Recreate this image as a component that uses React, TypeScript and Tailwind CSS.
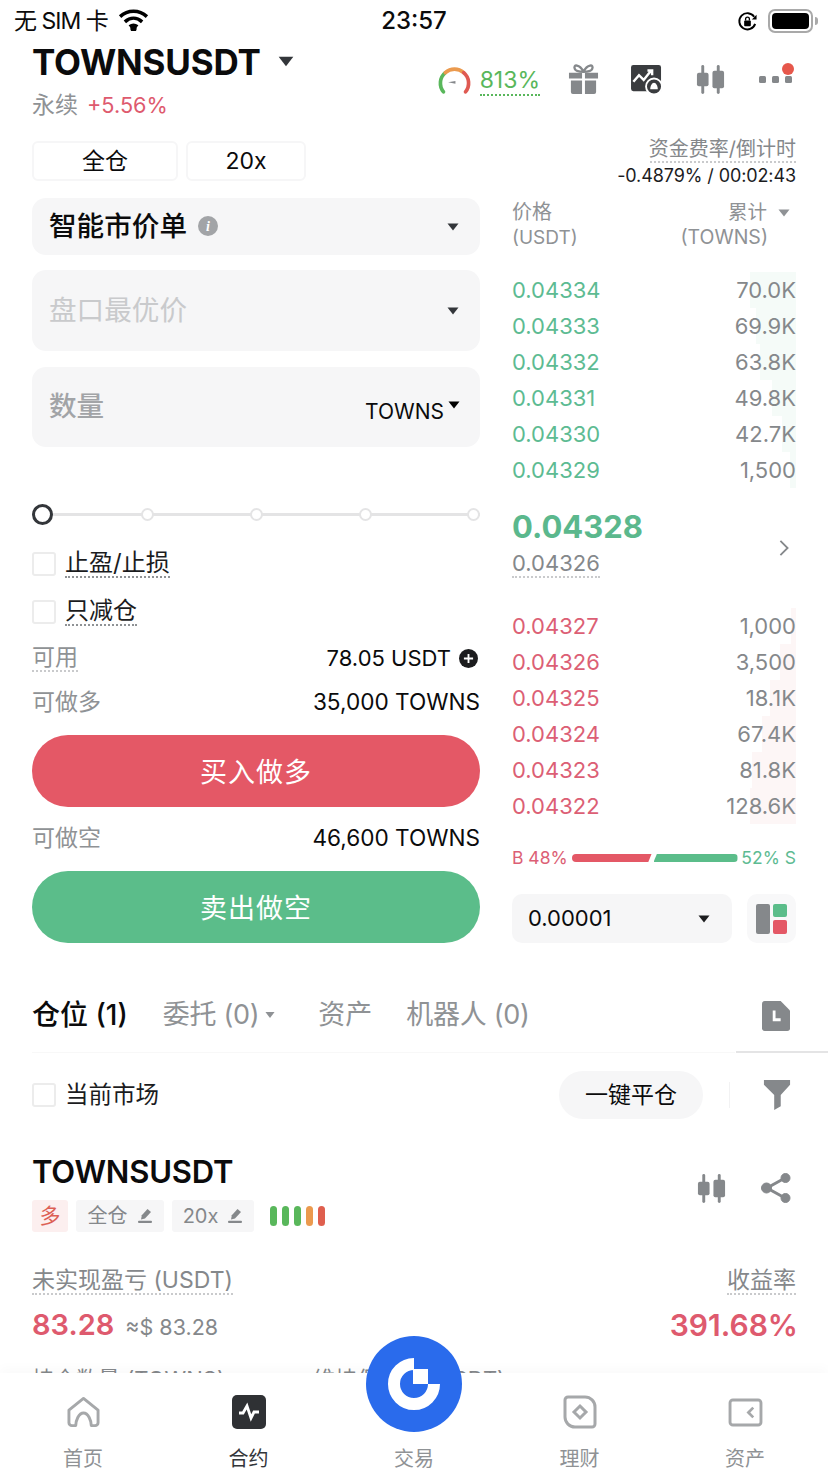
import type { ReactNode } from "react"

const asks = [
  ["0.04334", "70.0K", "w-[46px]"],
  ["0.04333", "69.9K", "w-[40px]"],
  ["0.04332", "63.8K", "w-[36px]"],
  ["0.04331", "49.8K", "w-[24px]"],
  ["0.04330", "42.7K", "w-[14px]"],
  ["0.04329", "1,500", "w-[6px]"],
]

const bids = [
  ["0.04327", "1,000", "w-[5px]"],
  ["0.04326", "3,500", "w-[16px]"],
  ["0.04325", "18.1K", "w-[26px]"],
  ["0.04324", "67.4K", "w-[34px]"],
  ["0.04323", "81.8K", "w-[44px]"],
  ["0.04322", "128.6K", "w-[46px]"],
]

function Caret({ className = "" }: { className?: string }) {
  return (
    <svg viewBox="0 0 12 8" className={className}>
      <path d="M0.5 0.5h11L6 7.5z" fill="currentColor" />
    </svg>
  )
}

function Candles({ className = "" }: { className?: string }) {
  return (
    <svg viewBox="0 0 32 32" className={className} fill="#85888b">
      <rect x="6.5" y="1" width="3" height="30" rx="1.5" />
      <rect x="2" y="9" width="12" height="14" rx="2" />
      <rect x="22.500" y="1" width="3" height="30" rx="1.5" />
      <rect x="18" y="7" width="12" height="18" rx="2" />
    </svg>
  )
}

function Pen() {
  return (
    <svg viewBox="0 0 16 16" className="w-[16px] h-[16px]" fill="#85888b">
      <path d="M10.500 1l3.500 3-6 6.500-4 1 .8-4.200z" />
      <rect x="1" y="12.800" width="14" height="2.200" rx="1" />
    </svg>
  )
}

function Checkbox() {
  return <span className="w-[24px] h-[24px] rounded-[3px] border-2 border-[#ececec] bg-white shrink-0" />
}

function Dotted({ children, className = "" }: { children: ReactNode; className?: string }) {
  return <span className={`border-b-2 border-dotted leading-[26px] ${className}`}>{children}</span>
}

function NavItem({ label, icon, active }: { label: string; icon: ReactNode; active?: boolean }) {
  return (
    <div className="w-[96px] flex flex-col items-center">
      <div className="h-[36px] flex items-center justify-center">{icon}</div>
      <span className={`mt-[17px] text-[20px] leading-[24px] ${active ? "text-[#33363a]" : "text-[#8f9295]"}`}>{label}</span>
    </div>
  )
}

export default function App() {
  return (
    <div className="relative w-[828px] h-[1472px] overflow-hidden bg-white font-['Inter','Noto_Sans_CJK_SC',sans-serif] text-[#0b0b0c]">
      {/* Status bar */}
      <div className="h-[42px] flex items-center justify-between pl-[14px] pr-[10px]">
        <div className="w-[260px] flex items-center gap-[10px] text-[23px] tracking-[-1px]">
          <span>无 SIM 卡</span>
          <svg viewBox="0 0 32 24" className="w-[31px] h-[23px] -mt-[3px]" fill="none" stroke="#000" strokeWidth="3.6">
            <path d="M2 9c8-7.500 20-7.500 28 0" />
            <path d="M7 14.500c5.500-5 12.500-5 18 0" />
            <path d="M12 19.500c2.500-2 5.500-2 8 0" />
            <circle cx="16" cy="21.500" r="1.500" fill="#000" />
          </svg>
        </div>
        <span className="text-[24px] font-medium">23:57</span>
        <div className="w-[264px] flex items-center justify-end gap-[10px]">
          <svg viewBox="0 0 22 22" className="w-[21px] h-[21px]" fill="none" stroke="#000" strokeWidth="2">
            <path d="M19 13.500A8.500 8.500 0 1 1 18 6" />
            <path d="M20.500 4v5h-5z" fill="#000" stroke="none" />
            <rect x="7.500" y="10" width="7" height="6" rx="1" fill="#000" stroke="none" />
            <path d="M9 10V8.500a2 2 0 0 1 4 0V10" strokeWidth="1.400" />
          </svg>
          <div className="flex items-center gap-[2px]">
            <div className="w-[45px] h-[24px] rounded-[7px] border-2 border-[#a9a9a9] p-[2px]">
              <div className="w-full h-full rounded-[4px] bg-black" />
            </div>
            <div className="w-[3px] h-[8px] rounded-r-full bg-[#a9a9a9]" />
          </div>
        </div>
      </div>

      {/* Title row */}
      <div className="h-[86px] pl-[32px] pr-[36px] flex justify-between">
        <div>
          <div className="flex items-center h-[40px]">
            <span className="text-[35px] leading-[40px] font-bold tracking-[-0.2px]">TOWNSUSDT</span>
            <Caret className="w-[16px] h-[11px] ml-[17px] -mt-[2px] text-[#33363a]" />
          </div>
          <div className="mt-[4px] flex items-center gap-[9px] h-[38px]">
            <span className="text-[23px] text-[#8f9295]">永续</span>
            <span className="text-[21.700px] text-[#de5a6e]">+5.56%</span>
          </div>
        </div>
        <div className="flex items-start pt-[22px]">
          <svg viewBox="0 0 36 32" className="w-[33px] h-[30px] mt-[1px]" fill="none" strokeWidth="4" strokeLinecap="round">
            <path d="M6 29A15 15 0 0 1 8 8" stroke="#59b75b" />
            <path d="M8 8A15 15 0 0 1 28 8" stroke="#eb9a4e" />
            <path d="M28 8A15 15 0 0 1 30 29" stroke="#df5a52" />
            <path d="M11 18.500l8-1.500v3z" fill="#85888b" stroke="none" />
          </svg>
          <span className="ml-[9px] mt-[3px] text-[23px] leading-[27px] text-[#59b75b] border-b-2 border-dotted border-[#59b75b]">813%</span>
          <svg viewBox="0 0 32 32" className="ml-[28px] w-[31px] h-[31px]" fill="#85888b">
            <path d="M1 9h13.500v6H1zM17.500 9H31v6H17.500zM3 17h11.500v14H5a2 2 0 0 1-2-2zM17.500 17H29v12a2 2 0 0 1-2 2h-9.500z" />
            <path d="M16 8C12 0 5 0 7 5c.6 1.800 4 3 9 3zm0 0c4-8 11-8 9-3-.6 1.800-4 3-9 3z" fill="none" stroke="#85888b" strokeWidth="2.400" />
          </svg>
          <svg viewBox="0 0 34 32" className="ml-[31px] w-[33px] h-[30px]">
            <path d="M3 1h27a2.500 2.500 0 0 1 2.500 2.500V29H3a2.500 2.500 0 0 1-2.500-2.500v-23A2.500 2.500 0 0 1 3 1z" fill="#3a3c3f" />
            <path d="M3 19l6-7 5 5 8-10m-4 0h5v5" fill="none" stroke="#fff" strokeWidth="2.600" />
            <circle cx="25" cy="24" r="8.500" fill="#3a3c3f" stroke="#fff" strokeWidth="2" />
            <path d="M21 27c0-4 2-7 4-7s4 3 4 7z" fill="#fff" />
          </svg>
          <Candles className="ml-[32px] w-[31px] h-[31px]" />
          <div className="relative ml-[33px] mt-[12px] flex gap-[6px]">
            <span className="w-[7px] h-[7px] rounded-[1.500px] bg-[#85888b]" />
            <span className="w-[7px] h-[7px] rounded-[1.500px] bg-[#85888b]" />
            <span className="w-[7px] h-[7px] rounded-[1.500px] bg-[#85888b]" />
            <span className="absolute -right-[2px] -top-[13px] w-[12px] h-[12px] rounded-full bg-[#e6574b]" />
          </div>
        </div>
      </div>

      {/* Order form + order book */}
      <div className="pl-[32px] pr-[32px] flex justify-between">
        <div className="w-[448px] pt-[13px]">
          <div className="flex gap-[8px]">
            <div className="w-[146px] h-[40px] rounded-[6px] border-2 border-[#f6f6f7] flex items-center justify-center text-[23px]">全仓</div>
            <div className="w-[120px] h-[40px] rounded-[6px] border-2 border-[#f6f6f7] flex items-center justify-center text-[23px]">20x</div>
          </div>

          <div className="mt-[17px] h-[57px] rounded-[14px] bg-[#f6f6f7] pl-[17px] pr-[21px] flex items-center justify-between">
            <div className="flex items-center gap-[11px]">
              <span className="text-[27.600px] font-medium">智能市价单</span>
              <span className="w-[20px] h-[20px] rounded-full bg-[#a2a4a7] flex items-center justify-center text-white text-[14px] italic font-['Liberation_Serif',serif] font-bold">i</span>
            </div>
            <Caret className="w-[12px] h-[8px] text-[#33363a]" />
          </div>

          <div className="mt-[15px] h-[81px] rounded-[14px] bg-[#f6f6f7] pl-[17px] pr-[21px] flex items-center justify-between">
            <span className="text-[27.600px] text-[#c9cacc]">盘口最优价</span>
            <Caret className="w-[12px] h-[8px] text-[#33363a]" />
          </div>

          <div className="mt-[16px] h-[80px] rounded-[14px] bg-[#f6f6f7] pl-[17px] pr-[20px] flex items-center justify-between">
            <span className="text-[27.600px] font-medium text-[#a2a4a7]">数量</span>
            <div className="flex items-start mt-[10px]">
              <span className="text-[21px] leading-[24px]">TOWNS</span>
              <Caret className="ml-[4px] mt-[1px] w-[12px] h-[8px] text-black" />
            </div>
          </div>

          {/* Leverage slider */}
          <div className="relative mt-[56px] h-[22px] flex items-center">
            <div className="absolute left-0 right-0 h-[3px] bg-[#e4e4e5]" />
            <span className="relative w-[21px] h-[21px] rounded-full border-[3px] border-[#33363a] bg-white" />
            <span className="relative ml-[88px] w-[13px] h-[13px] rounded-full border-2 border-[#e4e4e5] bg-white" />
            <span className="relative ml-[96px] w-[13px] h-[13px] rounded-full border-2 border-[#e4e4e5] bg-white" />
            <span className="relative ml-[96px] w-[13px] h-[13px] rounded-full border-2 border-[#e4e4e5] bg-white" />
            <span className="relative ml-auto w-[13px] h-[13px] rounded-full border-2 border-[#e4e4e5] bg-white" />
          </div>

          <div className="mt-[26px] h-[26px] flex items-center gap-[9px]">
            <Checkbox />
            <Dotted className="text-[24px] border-[#8f9295] text-[#1b1c1e]">止盈/止损</Dotted>
          </div>
          <div className="mt-[22px] h-[26px] flex items-center gap-[9px]">
            <Checkbox />
            <Dotted className="text-[24px] border-[#8f9295] text-[#1b1c1e]">只减仓</Dotted>
          </div>

          <div className="mt-[18px] h-[30px] flex items-center justify-between">
            <Dotted className="text-[23px] text-[#8f9295] border-[#c9cacc]">可用</Dotted>
            <div className="flex items-center gap-[8px] pr-[2px]">
              <span className="text-[22px]">78.05 USDT</span>
              <span className="w-[19px] h-[19px] rounded-full bg-[#1b1c1e] flex items-center justify-center">
                <svg viewBox="0 0 12 12" className="w-[11px] h-[11px]" stroke="#fff" strokeWidth="2">
                  <path d="M6 1v10M1 6h10" />
                </svg>
              </span>
            </div>
          </div>
          <div className="mt-[14px] h-[30px] flex items-center justify-between">
            <span className="text-[23px] text-[#8f9295]">可做多</span>
            <span className="text-[22.600px]">35,000 TOWNS</span>
          </div>

          <button className="mt-[18px] w-full h-[72px] pt-[4px] rounded-full bg-[#e45866] text-white text-[27px] tracking-[1px]">买入做多</button>

          <div className="mt-[16px] h-[30px] flex items-center justify-between">
            <span className="text-[23px] text-[#8f9295]">可做空</span>
            <span className="text-[22.600px]">46,600 TOWNS</span>
          </div>

          <button className="mt-[18px] w-full h-[72px] pt-[4px] rounded-full bg-[#5bbd8a] text-white text-[27px] tracking-[1px]">卖出做空</button>
        </div>

        {/* Order book */}
        <div className="w-[284px] -mt-[3px]">
          <div className="h-[38px] flex flex-col items-end justify-end text-[#8f9295] text-[19px] leading-[25px]">
            <span className="text-[20px] leading-[24px] text-[#85888b]">资金费率/倒计时</span>
            <div className="h-[1px] w-[146px] border-b-2 border-dotted border-[#c9cacc]" />
          </div>
          <div className="mt-[1px] h-[24px] text-right text-[18px] leading-[24px] text-[#1b1c1e] tracking-[-0.100px]">-0.4879% / 00:02:43</div>

          <div className="mt-[12px] flex justify-between text-[19px] leading-[25px] text-[#8f9295]">
            <div>
              <div className="text-[20px]">价格</div>
              <div>(USDT)</div>
            </div>
            <div className="text-right pr-[28px]">
              <div className="flex items-center justify-end -mr-[28px] pr-[6px] text-[19.500px]">
                累计
                <Caret className="ml-[11px] w-[12px] h-[8px]" />
              </div>
              <div className="text-[19.500px]">(TOWNS)</div>
            </div>
          </div>

          <div className="mt-[22px] relative">
            {asks.map(([price, qty, bar]) => (
              <div key={price} className="relative h-[36px] flex items-center justify-between text-[22px]">
                <div className={`absolute right-0 top-0 bottom-0 bg-[#f5fbf8] ${bar}`} />
                <span className="relative text-[#5dbb92]">{price}</span>
                <span className="relative text-[#85888b]">{qty}</span>
              </div>
            ))}
          </div>

          <div className="mt-[19px] flex items-center justify-between pr-[6px]">
            <div>
              <div className="text-[31px] leading-[40px] font-bold text-[#5bb88d]">0.04328</div>
              <span className="inline-block mt-[3px] text-[22px] leading-[26px] text-[#85888b] border-b-2 border-dotted border-[#c9cacc]">0.04326</span>
            </div>
            <svg viewBox="0 0 12 20" className="mt-[10px] w-[12px] h-[18px]" fill="none" stroke="#85888b" strokeWidth="2">
              <path d="M2 2l8 8-8 8" />
            </svg>
          </div>

          <div className="mt-[30px]">
            {bids.map(([price, qty, bar]) => (
              <div key={price} className="relative h-[36px] flex items-center justify-between text-[22px]">
                <div className={`absolute right-0 top-0 bottom-0 bg-[#fdf6f6] ${bar}`} />
                <span className="relative text-[#dc5f75]">{price}</span>
                <span className="relative text-[#85888b]">{qty}</span>
              </div>
            ))}
          </div>

          <div className="mt-[19px] h-[30px] flex items-center justify-between text-[17.500px]">
            <span className="text-[#dc5f75]">B 48%</span>
            <div className="flex items-center gap-[2px]">
              <div className="w-[80px] h-[8px] rounded-l-full bg-[#e45866] [clip-path:polygon(0_0,100%_0,96%_100%,0_100%)]" />
              <div className="w-[84px] h-[8px] rounded-r-full bg-[#5bbd8a] [clip-path:polygon(4%_0,100%_0,100%_100%,0_100%)]" />
            </div>
            <span className="text-[#5dbb92]">52% S</span>
          </div>

          <div className="mt-[21px] flex justify-between">
            <div className="w-[220px] h-[49px] rounded-[10px] bg-[#f6f6f7] pl-[16px] pr-[22px] flex items-center justify-between">
              <span className="text-[22px]">0.00001</span>
              <Caret className="w-[12px] h-[8px] text-[#1b1c1e]" />
            </div>
            <div className="w-[49px] h-[49px] rounded-[10px] bg-[#f8f8f9] flex items-center justify-center">
              <div className="flex gap-[3px] h-[30px] w-[31px]">
                <div className="w-[14px] rounded-[2px] bg-[#85888b]" />
                <div className="flex-1 flex flex-col gap-[3px]">
                  <div className="flex-1 rounded-[2px] bg-[#5bbd8a]" />
                  <div className="flex-1 rounded-[2px] bg-[#e45866]" />
                </div>
              </div>
            </div>
          </div>
        </div>
      </div>

      {/* Tabs */}
      <div className="mt-[47px] h-[63px] pl-[32px] flex items-start relative">
        <div className="h-[50px] flex items-center">
          <span className="text-[28px] font-medium">仓位 (1)</span>
          <span className="ml-[35px] text-[27px] text-[#8f9295] tracking-[-0.300px]">委托 (0)</span>
          <Caret className="ml-[6px] w-[10px] h-[8px] text-[#8f9295]" />
          <span className="ml-[43px] text-[27px] text-[#8f9295]">资产</span>
          <span className="ml-[34px] text-[27px] text-[#8f9295] tracking-[-0.300px]">机器人 (0)</span>
        </div>
        <svg viewBox="0 0 30 32" className="absolute right-[38px] top-[10px] w-[28px] h-[32px]">
          <path d="M3 0h17l10 10v19a3 3 0 0 1-3 3H3a3 3 0 0 1-3-3V3a3 3 0 0 1 3-3z" fill="#85888b" />
          <path d="M13 10v10h7" fill="none" stroke="#fff" strokeWidth="3" />
        </svg>
        <div className="absolute left-[32px] right-[93px] bottom-0 h-[1px] bg-[#f8f8f8]" />
        <div className="absolute right-0 w-[92px] bottom-0 h-[2px] bg-[#e4e4e5]" />
      </div>

      {/* Filter row */}
      <div className="mt-[18px] h-[48px] pl-[32px] pr-[37px] flex items-center justify-between">
        <div className="flex items-center gap-[9px]">
          <Checkbox />
          <span className="text-[23.500px] text-[#1b1c1e]">当前市场</span>
        </div>
        <div className="flex items-center">
          <div className="w-[144px] h-[48px] rounded-full bg-[#f6f6f7] flex items-center justify-center text-[23px]">一键平仓</div>
          <div className="ml-[26px] w-[1px] h-[26px] bg-[#f2f2f3]" />
          <svg viewBox="0 0 30 32" className="ml-[33px] w-[28px] h-[32px]" fill="#85888b">
            <path d="M1 0h28v5L19 16v12l-7 4V16L1 5z" />
          </svg>
        </div>
      </div>

      {/* Position card */}
      <div className="mt-[29px] pl-[32px] pr-[32px]">
        <div className="flex justify-between">
          <div>
            <div className="text-[31px] leading-[48px] font-semibold tracking-[-0.2px]">TOWNSUSDT</div>
            <div className="mt-[4px] flex items-center gap-[8px]">
              <span className="w-[36px] h-[32px] rounded-[3px] bg-[#fcefef] flex items-center justify-center text-[21px] text-[#dc5f55]">多</span>
              <span className="w-[88px] h-[32px] rounded-[3px] bg-[#f6f6f7] flex items-center justify-center gap-[9px] text-[20px] text-[#85888b]">全仓<Pen /></span>
              <span className="w-[82px] h-[32px] rounded-[3px] bg-[#f6f6f7] flex items-center justify-center gap-[9px] text-[20px] text-[#85888b]">20x<Pen /></span>
              <div className="ml-[8px] flex gap-[5px]">
                <span className="w-[7px] h-[20px] rounded-full bg-[#59b75b]" />
                <span className="w-[7px] h-[20px] rounded-full bg-[#59b75b]" />
                <span className="w-[7px] h-[20px] rounded-full bg-[#59b75b]" />
                <span className="w-[7px] h-[20px] rounded-full bg-[#eb9a4e]" />
                <span className="w-[7px] h-[20px] rounded-full bg-[#df5f4e]" />
              </div>
            </div>
          </div>
          <div className="flex items-center gap-[33px] h-[36px] mt-[22px] pr-[5px]">
            <Candles className="w-[31px] h-[31px]" />
            <svg viewBox="0 0 32 32" className="w-[32px] h-[32px] -mr-[1px]" fill="#85888b" stroke="#85888b">
              <path d="M25 6L7 16l18 10" fill="none" strokeWidth="3" />
              <circle cx="25.500" cy="6" r="4.500" />
              <circle cx="6.500" cy="16" r="5" />
              <circle cx="25.500" cy="26" r="4.500" />
            </svg>
          </div>
        </div>

        <div className="mt-[35px] flex justify-between">
          <Dotted className="text-[23px] text-[#85888b] border-[#c9cacc]">未实现盈亏 (USDT)</Dotted>
          <Dotted className="text-[23px] text-[#85888b] border-[#c9cacc]">收益率</Dotted>
        </div>
        <div className="mt-[12px] h-[36px] flex items-center justify-between">
          <div className="flex items-baseline gap-[11px]">
            <span className="text-[29px] font-semibold text-[#de5a6e]">83.28</span>
            <span className="text-[21.500px] text-[#85888b]">≈$ 83.28</span>
          </div>
          <span className="text-[30px] -mr-[2px] font-semibold text-[#de5a6e]">391.68%</span>
        </div>
        <div className="mt-[20px] flex gap-[88px] text-[22px] text-[#85888b]">
          <span>持仓数量 (TOWNS)</span>
          <span>维持保证金 (USDT)</span>
        </div>
      </div>

      {/* Tab bar, sits over the position list */}
      <nav className="absolute left-0 right-0 bottom-0 h-[99px] bg-white shadow-[0_-6px_10px_rgba(0,0,0,0.02)] pt-[21px] flex justify-between px-[35px]">
        <NavItem
          label="首页"
          icon={
            <svg viewBox="0 0 34 32" className="w-[33px] h-[32px]" fill="none" stroke="#a6a8aa" strokeWidth="3" strokeLinejoin="round">
              <path d="M2 14L17 2l15 12v13a3 3 0 0 1-3 3h-4c0-5-3-13-8-13s-8 8-8 13H5a3 3 0 0 1-3-3z" />
            </svg>
          }
        />
        <NavItem
          active
          label="合约"
          icon={
            <svg viewBox="0 0 34 34" className="w-[34px] h-[34px]">
              <rect width="34" height="34" rx="5" fill="#2f3134" />
              <path d="M7 18h4l4-7 4 12 3-6h5" fill="none" stroke="#fff" strokeWidth="2.800" />
            </svg>
          }
        />
        <NavItem label="交易" icon={<span className="w-[34px] h-[34px]" />} />
        <NavItem
          label="理财"
          icon={
            <svg viewBox="0 0 34 34" className="w-[34px] h-[34px]" fill="none" stroke="#a6a8aa" strokeWidth="3">
              <path d="M5 2h17a10 10 0 0 1 10 10v17a3 3 0 0 1-3 3H12A10 10 0 0 1 2 22V5a3 3 0 0 1 3-3z" />
              <path d="M17 11l6 6-6 6-6-6z" />
            </svg>
          }
        />
        <NavItem
          label="资产"
          icon={
            <svg viewBox="0 0 36 30" className="w-[35px] h-[29px]" fill="none" stroke="#a6a8aa" strokeWidth="3">
              <rect x="2" y="2" width="32" height="26" rx="3" />
              <path d="M26 10l-5 5 5 5" strokeWidth="2.800" />
            </svg>
          }
        />
      </nav>

      {/* Center trade button */}
      <div className="absolute left-[366px] top-[1336px] w-[96px] h-[96px] rounded-full bg-[#2a6bec]">
        <svg viewBox="0 0 96 96" className="w-[96px] h-[96px]" fill="none">
          <path d="M48 28A20 20 0 1 0 68 48" stroke="#fff" strokeWidth="12" />
          <rect x="47" y="33" width="15" height="15" fill="#fff" />
        </svg>
      </div>
    </div>
  )
}
